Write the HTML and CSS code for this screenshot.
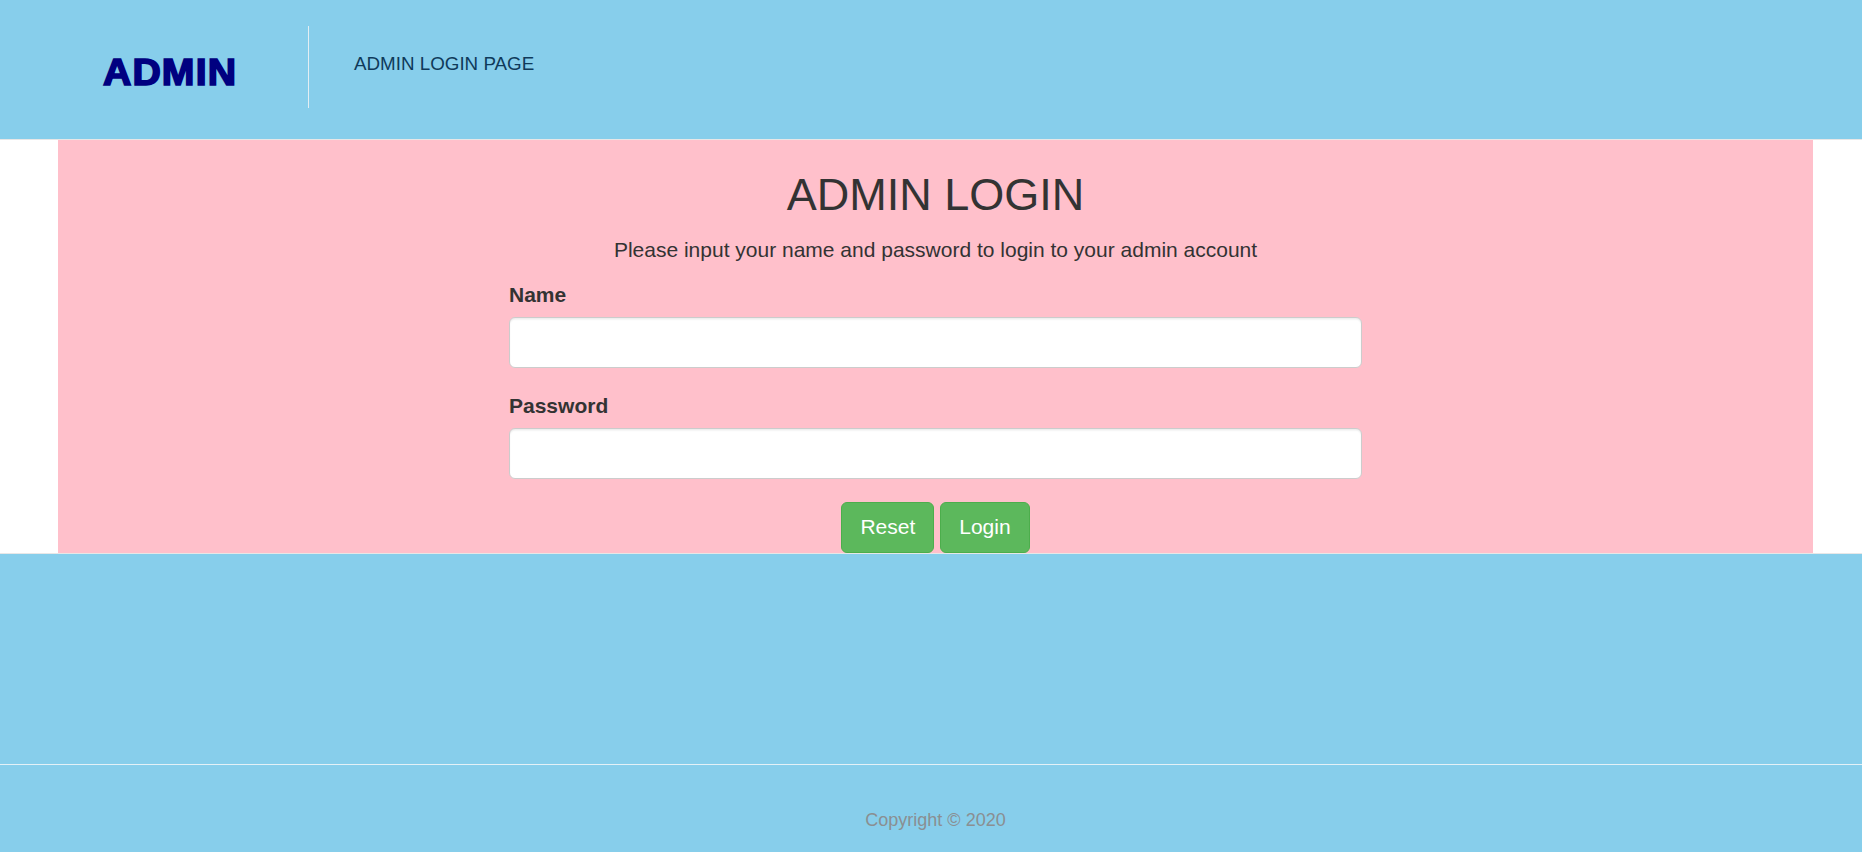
FILE: index.html
```html
<!DOCTYPE html>
<html lang="en">
<head>
<meta charset="utf-8">
<title>Admin Login</title>
<link rel="stylesheet" href="styles.css">
</head>
<body>
<header class="topbar">
  <div class="brand"><span class="brand-text">ADMIN</span></div>
  <div class="divider"></div>
  <div class="page-title">ADMIN LOGIN PAGE</div>
</header>
<main class="panel">
  <h2 class="title">ADMIN LOGIN</h2>
  <p class="lead">Please input your name and password to login to your admin account</p>
  <form class="login-form">
    <div class="form-group">
      <label class="label" for="name">Name</label>
      <input class="field" id="name" type="text">
    </div>
    <div class="form-group">
      <label class="label" for="password">Password</label>
      <input class="field" id="password" type="password">
    </div>
    <div class="actions">
      <button class="btn" type="reset">Reset</button>
      <button class="btn" type="submit">Login</button>
    </div>
  </form>
</main>
<footer class="footer">
  <div class="footer-top"></div>
  <div class="footer-bottom">Copyright © 2020</div>
</footer>
</body>
</html>
```
FILE: styles.css
```css
* { box-sizing: border-box; }
html, body {
  margin: 0;
  padding: 0;
  background: #fff;
  font-family: "Liberation Sans", Arial, sans-serif;
  color: #333;
}
.topbar {
  display: flex;
  align-items: flex-start;
  height: 140px;
  padding-left: 103px;
  background: #87ceeb;
  border-bottom: 1px solid #e7e7e7;
}
.brand {
  width: 205px;
  margin-top: 55px;
  font-size: 36px;
  line-height: 36px;
  font-weight: bold;
  color: #000080;
}
.brand-text {
  display: inline-block;
  letter-spacing: 1px;
  -webkit-text-stroke: 1.6px #000080;
  transform: scaleX(1.09);
  transform-origin: left center;
}
.divider {
  width: 1px;
  height: 82px;
  margin-top: 26px;
  background: #e3eef3;
}
.page-title {
  margin-left: 45px;
  margin-top: 55px;
  font-size: 18.8px;
  line-height: 1;
  color: #0f3a5a;
}
.panel {
  margin: 0 49px 0 58px;
  background: #ffc0cb;
  text-align: center;
}
.title {
  margin: 0 0 15px;
  padding-top: 30px;
  font-size: 45px;
  line-height: 1.1;
  font-weight: 500;
  color: #333;
}
.lead {
  margin: 0 0 15px;
  font-size: 21px;
  line-height: 30px;
  color: #333;
}
.login-form {
  width: 853px;
  margin: 0 auto;
  text-align: left;
}
.form-group {
  margin-bottom: 22.5px;
}
.label {
  display: block;
  margin-bottom: 7.5px;
  font-size: 21px;
  line-height: 30px;
  font-weight: bold;
  color: #333;
}
.field {
  display: block;
  width: 100%;
  height: 51px;
  padding: 9px 18px;
  font: inherit;
  font-size: 21px;
  background: #fff;
  border: 1.5px solid #ccc;
  border-radius: 6px;
  box-shadow: inset 0 1.5px 1.5px rgba(0,0,0,.075);
}
.actions {
  display: flex;
  justify-content: center;
  gap: 6px;
}
.btn {
  height: 51px;
  padding: 9px 18px;
  font-family: inherit;
  font-size: 21px;
  line-height: 30px;
  color: #fff;
  background: #5cb85c;
  border: 1.5px solid #4cae4c;
  border-radius: 6px;
}
.footer {
  background: #87ceeb;
  border-top: 1px solid #e7e7e7;
}
.footer-top {
  height: 211px;
  border-bottom: 1px solid #e4f1f7;
}
.footer-bottom {
  height: 87px;
  padding-top: 43px;
  margin-left: 9px;
  text-align: center;
  font-size: 18px;
  line-height: 25.7px;
  color: #8a8f92;
}
```
